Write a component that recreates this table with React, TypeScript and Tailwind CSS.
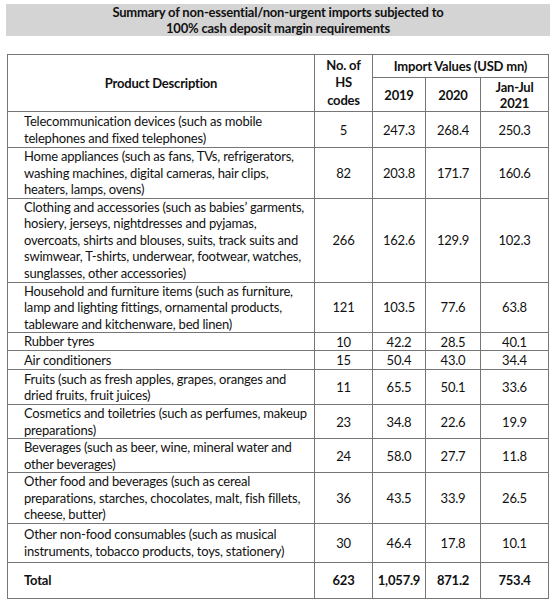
const rows: { desc: string[]; hs: string; y19: string; y20: string; y21: string; h: string }[] = [
  {
    desc: ["Telecommunication devices (such as mobile", "telephones and fixed telephones)"],
    hs: "5", y19: "247.3", y20: "268.4", y21: "250.3", h: "h-[36px]",
  },
  {
    desc: [
      "Home appliances (such as fans, TVs, refrigerators,",
      "washing machines, digital cameras, hair clips,",
      "heaters, lamps, ovens)",
    ],
    hs: "82", y19: "203.8", y20: "171.7", y21: "160.6", h: "h-[50px]",
  },
  {
    desc: [
      "Clothing and accessories (such as babies\u2019 garments,",
      "hosiery, jerseys, nightdresses and pyjamas,",
      "overcoats, shirts and blouses, suits, track suits and",
      "swimwear, T-shirts, underwear, footwear, watches,",
      "sunglasses, other accessories)",
    ],
    hs: "266", y19: "162.6", y20: "129.9", y21: "102.3", h: "h-[84px]",
  },
  {
    desc: [
      "Household and furniture items (such as furniture,",
      "lamp and lighting fittings, ornamental products,",
      "tableware and kitchenware, bed linen)",
    ],
    hs: "121", y19: "103.5", y20: "77.6", y21: "63.8", h: "h-[49px]",
  },
  { desc: ["Rubber tyres"], hs: "10", y19: "42.2", y20: "28.5", y21: "40.1", h: "h-[18px]" },
  { desc: ["Air conditioners"], hs: "15", y19: "50.4", y20: "43.0", y21: "34.4", h: "h-[19px]" },
  {
    desc: ["Fruits (such as fresh apples, grapes, oranges and", "dried fruits, fruit juices)"],
    hs: "11", y19: "65.5", y20: "50.1", y21: "33.6", h: "h-[35px]",
  },
  {
    desc: ["Cosmetics and toiletries (such as perfumes, makeup", "preparations)"],
    hs: "23", y19: "34.8", y20: "22.6", y21: "19.9", h: "h-[32px]",
  },
  {
    desc: ["Beverages (such as beer, wine, mineral water and", "other beverages)"],
    hs: "24", y19: "58.0", y20: "27.7", y21: "11.8", h: "h-[33px]",
  },
  {
    desc: [
      "Other food and beverages (such as cereal",
      "preparations, starches, chocolates, malt, fish fillets,",
      "cheese, butter)",
    ],
    hs: "36", y19: "43.5", y20: "33.9", y21: "26.5", h: "h-[50px]",
  },
  {
    desc: ["Other non-food consumables (such as musical", "instruments, tobacco products, toys, stationery)"],
    hs: "30", y19: "46.4", y20: "17.8", y21: "10.1", h: "h-[39px]",
  },
];

const cell = "border border-[#767676] p-0";

export default function App() {
  return (
    <div className="w-[550px] h-[599px] overflow-hidden bg-white text-[#111] font-['Lato','Open_Sans',sans-serif] text-[13px] tracking-[-0.2px] leading-[16px]">
      <div className="ml-[6px] mt-[4px] h-[32px] bg-[#d4d4d4] flex flex-col items-center justify-center font-bold text-[13px] leading-[16px]">
        <span>Summary of non-essential/non-urgent imports subjected to</span>
        <span>100% cash deposit margin requirements</span>
      </div>

      <table className="ml-[7px] mt-[18px] w-[541px] border-collapse table-fixed">
        <colgroup>
          <col className="w-[307px]" />
          <col className="w-[58px]" />
          <col className="w-[53px]" />
          <col className="w-[55px]" />
          <col className="w-[68px]" />
        </colgroup>
        <thead className="font-bold">
          <tr className="h-[23px]">
            <th rowSpan={2} className={`${cell} text-center`}>Product Description</th>
            <th rowSpan={2} className={`${cell} text-center leading-[17.5px]`}>
              No. of
              <br />
              HS
              <br />
              codes
            </th>
            <th colSpan={3} className={`${cell} text-center`}>Import Values (USD mn)</th>
          </tr>
          <tr className="h-[34px]">
            <th className={`${cell} text-center`}>2019</th>
            <th className={`${cell} text-center`}>2020</th>
            <th className={`${cell} text-center`}>
              Jan-Jul
              <br />
              2021
            </th>
          </tr>
        </thead>
        <tbody>
          {rows.map((r) => (
            <tr key={r.hs} className={r.h}>
              <td className={`${cell} pl-[16px] whitespace-nowrap leading-[16.5px]`}>
                {r.desc.map((line, i) => (
                  <div key={i}>{line}</div>
                ))}
              </td>
              <td className={`${cell} text-center`}>{r.hs}</td>
              <td className={`${cell} text-center`}>{r.y19}</td>
              <td className={`${cell} text-center`}>{r.y20}</td>
              <td className={`${cell} text-center`}>{r.y21}</td>
            </tr>
          ))}
          <tr className="h-[36px] font-bold">
            <td className={`${cell} pl-[16px]`}>Total</td>
            <td className={`${cell} text-center`}>623</td>
            <td className={`${cell} text-center`}>1,057.9</td>
            <td className={`${cell} text-center`}>871.2</td>
            <td className={`${cell} text-center`}>753.4</td>
          </tr>
        </tbody>
      </table>
    </div>
  );
}
